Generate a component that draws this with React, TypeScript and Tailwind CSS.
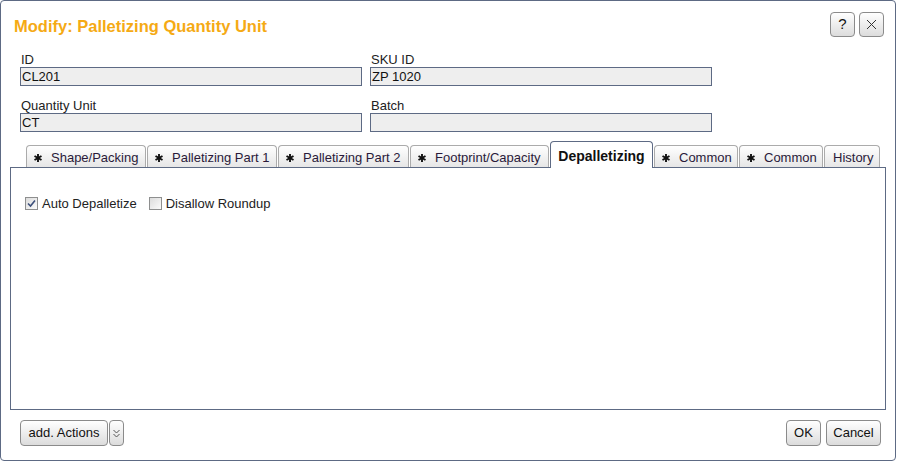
import React from "react";

const font = { fontFamily: '"Liberation Sans", Arial, sans-serif' };

const tabs = [
  { label: "Shape/Packing", star: true, w: 120 },
  { label: "Palletizing Part 1", star: true, w: 130 },
  { label: "Palletizing Part 2", star: true, w: 131 },
  { label: "Footprint/Capacity", star: true, w: 139 },
  { label: "Depalletizing", star: false, w: 103, active: true },
  { label: "Common", star: true, w: 84 },
  { label: "Common", star: true, w: 84 },
  { label: "History", star: false, w: 56 },
];

function Star() {
  return (
    <svg width="8" height="8" viewBox="0 0 8 8" className="shrink-0">
      <g stroke="#111" strokeWidth="1.9" strokeLinecap="butt">
        <line x1="4" y1="0" x2="4" y2="8" />
        <line x1="0.5" y1="2" x2="7.5" y2="6" />
        <line x1="0.5" y1="6" x2="7.5" y2="2" />
      </g>
    </svg>
  );
}

function Field({ label, value }: { label: string; value: string }) {
  return (
    <div className="flex w-[342px] flex-col">
      <span className="pl-[1px] text-[13px] leading-[15px] text-[#222]">{label}</span>
      <div className="h-[19px] border border-[#5d6a84] bg-[#eeeeee] px-[1px] text-[13px] leading-[17px] text-[#111]">
        {value}
      </div>
    </div>
  );
}

function Checkbox({ checked, label }: { checked?: boolean; label: string }) {
  return (
    <label className="flex items-center gap-[4px]">
      <span className="flex h-[13px] w-[13px] items-center justify-center border border-[#8e8f8f] bg-gradient-to-br from-[#dcdcdc] to-[#fbfbfb]">
        {checked && (
          <svg width="9" height="9" viewBox="0 0 9 9">
            <path d="M1 4.5 L3.5 7 L8 1.5" fill="none" stroke="#3c4f7a" strokeWidth="1.6" />
          </svg>
        )}
      </span>
      <span className="text-[13px] text-[#222]">{label}</span>
    </label>
  );
}

const btn =
  "flex items-center justify-center rounded-[4px] border border-[#8b8b8b] bg-gradient-to-b from-[#ffffff] to-[#dcdcdc] text-[13px] text-[#111]";

export default function App() {
  return (
    <div className="h-[462px] w-[897px] bg-white" style={font}>
      <div className="flex h-[461px] w-[896px] flex-col rounded-[4px] border border-[#5d6a84]">
        <div className="flex items-start justify-between pl-[13px] pr-[11px] pt-[11px]">
          <h1 className="pt-[5px] text-[16.5px] font-bold leading-[18px] text-[#f5aa14]">
            Modify: Palletizing Quantity Unit
          </h1>
          <div className="flex gap-[4px]">
            <div className={`${btn} h-[25px] w-[25px] text-[15px]`}>?</div>
            <div className={`${btn} h-[25px] w-[25px]`}>
              <svg width="11" height="11" viewBox="0 0 11 11">
                <path d="M1 1 L10 10 M10 1 L1 10" stroke="#333" strokeWidth="1" />
              </svg>
            </div>
          </div>
        </div>

        <div className="mt-[15px] grid grid-cols-[342px_342px] gap-x-[8px] gap-y-[12px] pl-[19px]">
          <Field label="ID" value="CL201" />
          <Field label="SKU ID" value="ZP 1020" />
          <Field label="Quantity Unit" value="CT" />
          <Field label="Batch" value="" />
        </div>

        <div className="mt-[9px] flex flex-col px-[9px]">
          <div className="relative z-10 flex items-end gap-[1px] pl-[16px]">
            {tabs.map((t, i) =>
              t.active ? (
                <div
                  key={i}
                  style={{ width: t.w }}
                  className="-mb-px flex h-[27px] items-center justify-center rounded-t-[4px] border border-b-0 border-[#5d6a84] bg-white pt-[2px] text-[14px] font-bold text-[#111]"
                >
                  {t.label}
                </div>
              ) : (
                <div
                  key={i}
                  style={{ width: t.w }}
                  className="flex h-[22px] items-center gap-[9px] rounded-t-[4px] border border-b-0 border-[#ababab] bg-gradient-to-b from-[#ffffff] to-[#e6e6e6] pl-[7px] pt-[2px] text-[13px] text-[#2a1a3a]"
                >
                  {t.star && <Star />}
                  <span className={t.star ? "" : "pl-[1px]"}>{t.label}</span>
                </div>
              )
            )}
          </div>
          <div className="h-[243px] border border-[#5d6a84] bg-white pl-[14px] pt-[26px]">
            <div className="flex items-center gap-[12px]">
              <Checkbox checked label="Auto Depalletize" />
              <Checkbox label="Disallow Roundup" />
            </div>
          </div>
        </div>

        <div className="mt-[10px] flex items-center justify-between pl-[19px] pr-[14px]">
          <div className="flex gap-[1px]">
            <div className={`${btn} h-[26px] w-[88px] text-[13.5px]`}>add. Actions</div>
            <div className={`${btn} h-[26px] w-[15px]`}>
              <svg width="7" height="9" viewBox="0 0 7 9">
                <path d="M0.5 1 L3.5 4 L6.5 1 M0.5 5 L3.5 8 L6.5 5" fill="none" stroke="#555" strokeWidth="1" />
              </svg>
            </div>
          </div>
          <div className="flex gap-[5px]">
            <div className={`${btn} h-[26px] w-[35px]`}>OK</div>
            <div className={`${btn} h-[26px] w-[55px]`}>Cancel</div>
          </div>
        </div>
      </div>
    </div>
  );
}
